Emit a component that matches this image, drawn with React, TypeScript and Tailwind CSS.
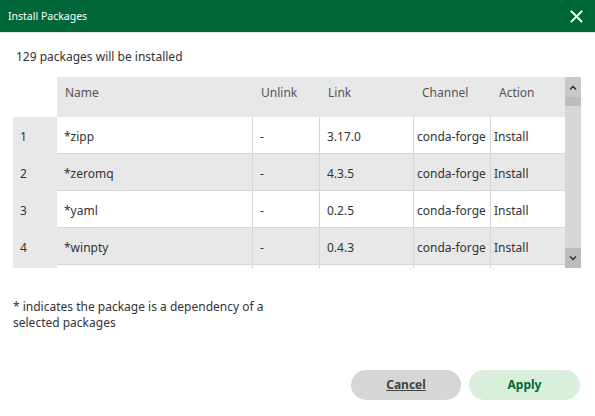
import React from "react";

const rows = [
  { i: "1", name: "*zipp", unlink: "-", link: "3.17.0", ch: "conda-forge", act: "Install" },
  { i: "2", name: "*zeromq", unlink: "-", link: "4.3.5", ch: "conda-forge", act: "Install" },
  { i: "3", name: "*yaml", unlink: "-", link: "0.2.5", ch: "conda-forge", act: "Install" },
  { i: "4", name: "*winpty", unlink: "-", link: "0.4.3", ch: "conda-forge", act: "Install" },
  { i: "", name: "", unlink: "", link: "", ch: "", act: "" },
];

export default function App() {
  return (
    <div
      className="w-[595px] h-[416px] bg-white flex flex-col text-[#333] overflow-hidden"
      style={{ fontFamily: '"Noto Sans", "Open Sans", sans-serif' }}
    >
      <div className="h-[33px] shrink-0 bg-[#006838] border-b border-[#dbe9e1] flex items-center justify-between pl-[8px] pr-[12px]">
        <span className="text-white text-[10.5px] pt-[1px]">Install Packages</span>
        <svg width="13" height="13" viewBox="0 0 13 13">
          <path d="M1.5 1.5 L11.5 11.5 M11.5 1.5 L1.5 11.5" stroke="white" strokeWidth="1.8" strokeLinecap="square" />
        </svg>
      </div>
      <div className="pl-[16px] pt-[15px] text-[12px] leading-[18px] h-[44px]">129 packages will be installed</div>
      <div className="ml-[13px] flex h-[191px] overflow-hidden">
        <div className="w-[552px] flex flex-col text-[12px]">
          <div className="flex h-[40px] shrink-0 text-[#555]">
            <div className="w-[44px] bg-white" />
            <div className="flex-1 bg-[#e8e8e8] flex">
              <div className="w-[196px] pl-[8px] pt-[7px]">Name</div>
              <div className="w-[67px] pl-[8px] pt-[7px]">Unlink</div>
              <div className="w-[94px] pl-[8px] pt-[7px]">Link</div>
              <div className="w-[77px] pl-[8px] pt-[7px]">Channel</div>
              <div className="w-[74px] pl-[8px] pt-[7px]">Action</div>
            </div>
          </div>
          {rows.map((r, idx) => (
            <div key={idx} className="flex h-[37px] shrink-0">
              <div className="w-[44px] bg-[#e8e8e8] pl-[7px] pt-[4px] flex items-center border-b border-[#e8e8e8]">{r.i}</div>
              <div
                className={`flex-1 flex border-b border-[#d6d6d6] ${idx % 2 === 0 ? "bg-white" : "bg-[#e8e8e8]"}`}
              >
                <div className="w-[196px] pl-[7px] pt-[4px] flex items-center border-r border-[#d6d6d6]">{r.name}</div>
                <div className="w-[67px] pl-[7px] pt-[4px] flex items-center border-r border-[#d6d6d6]">{r.unlink}</div>
                <div className="w-[94px] pl-[7px] pt-[4px] flex items-center border-r border-[#d6d6d6]">{r.link}</div>
                <div className="w-[77px] pl-[3px] pt-[4px] flex items-center border-r border-[#d6d6d6]">{r.ch}</div>
                <div className="w-[74px] pl-[3px] pt-[4px] flex items-center">{r.act}</div>
              </div>
            </div>
          ))}
        </div>
        <div className="w-[16px] flex flex-col bg-[#d6d6d6]">
          <div className="h-[20px] bg-[#c9c9c9] flex items-center justify-center">
            <svg width="8" height="5" viewBox="0 0 8 5">
              <path d="M1 4.5 L4 1.5 L7 4.5" stroke="#333" strokeWidth="1.5" fill="none" />
            </svg>
          </div>
          <div className="h-[9px] bg-[#bdbdbd]" />
          <div className="flex-1" />
          <div className="h-[20px] bg-[#bdbdbd] flex items-center justify-center">
            <svg width="8" height="5" viewBox="0 0 8 5">
              <path d="M1 0.5 L4 3.5 L7 0.5" stroke="#333" strokeWidth="1.5" fill="none" />
            </svg>
          </div>
        </div>
      </div>
      <div className="pl-[13px] pt-[31px] text-[12px] leading-[16px] w-[275px]">
        * indicates the package is a dependency of a selected packages
      </div>
      <div className="flex-1" />
      <div className="flex justify-end gap-[8px] pr-[15px] pb-[16px]">
        <button className="w-[110px] h-[30px] rounded-full bg-[#d6d6d6] text-[#444] font-bold text-[12px] underline">
          Cancel
        </button>
        <button className="w-[111px] h-[30px] rounded-full bg-[#d9eedb] text-[#006838] font-bold text-[12px]">
          Apply
        </button>
      </div>
    </div>
  );
}
